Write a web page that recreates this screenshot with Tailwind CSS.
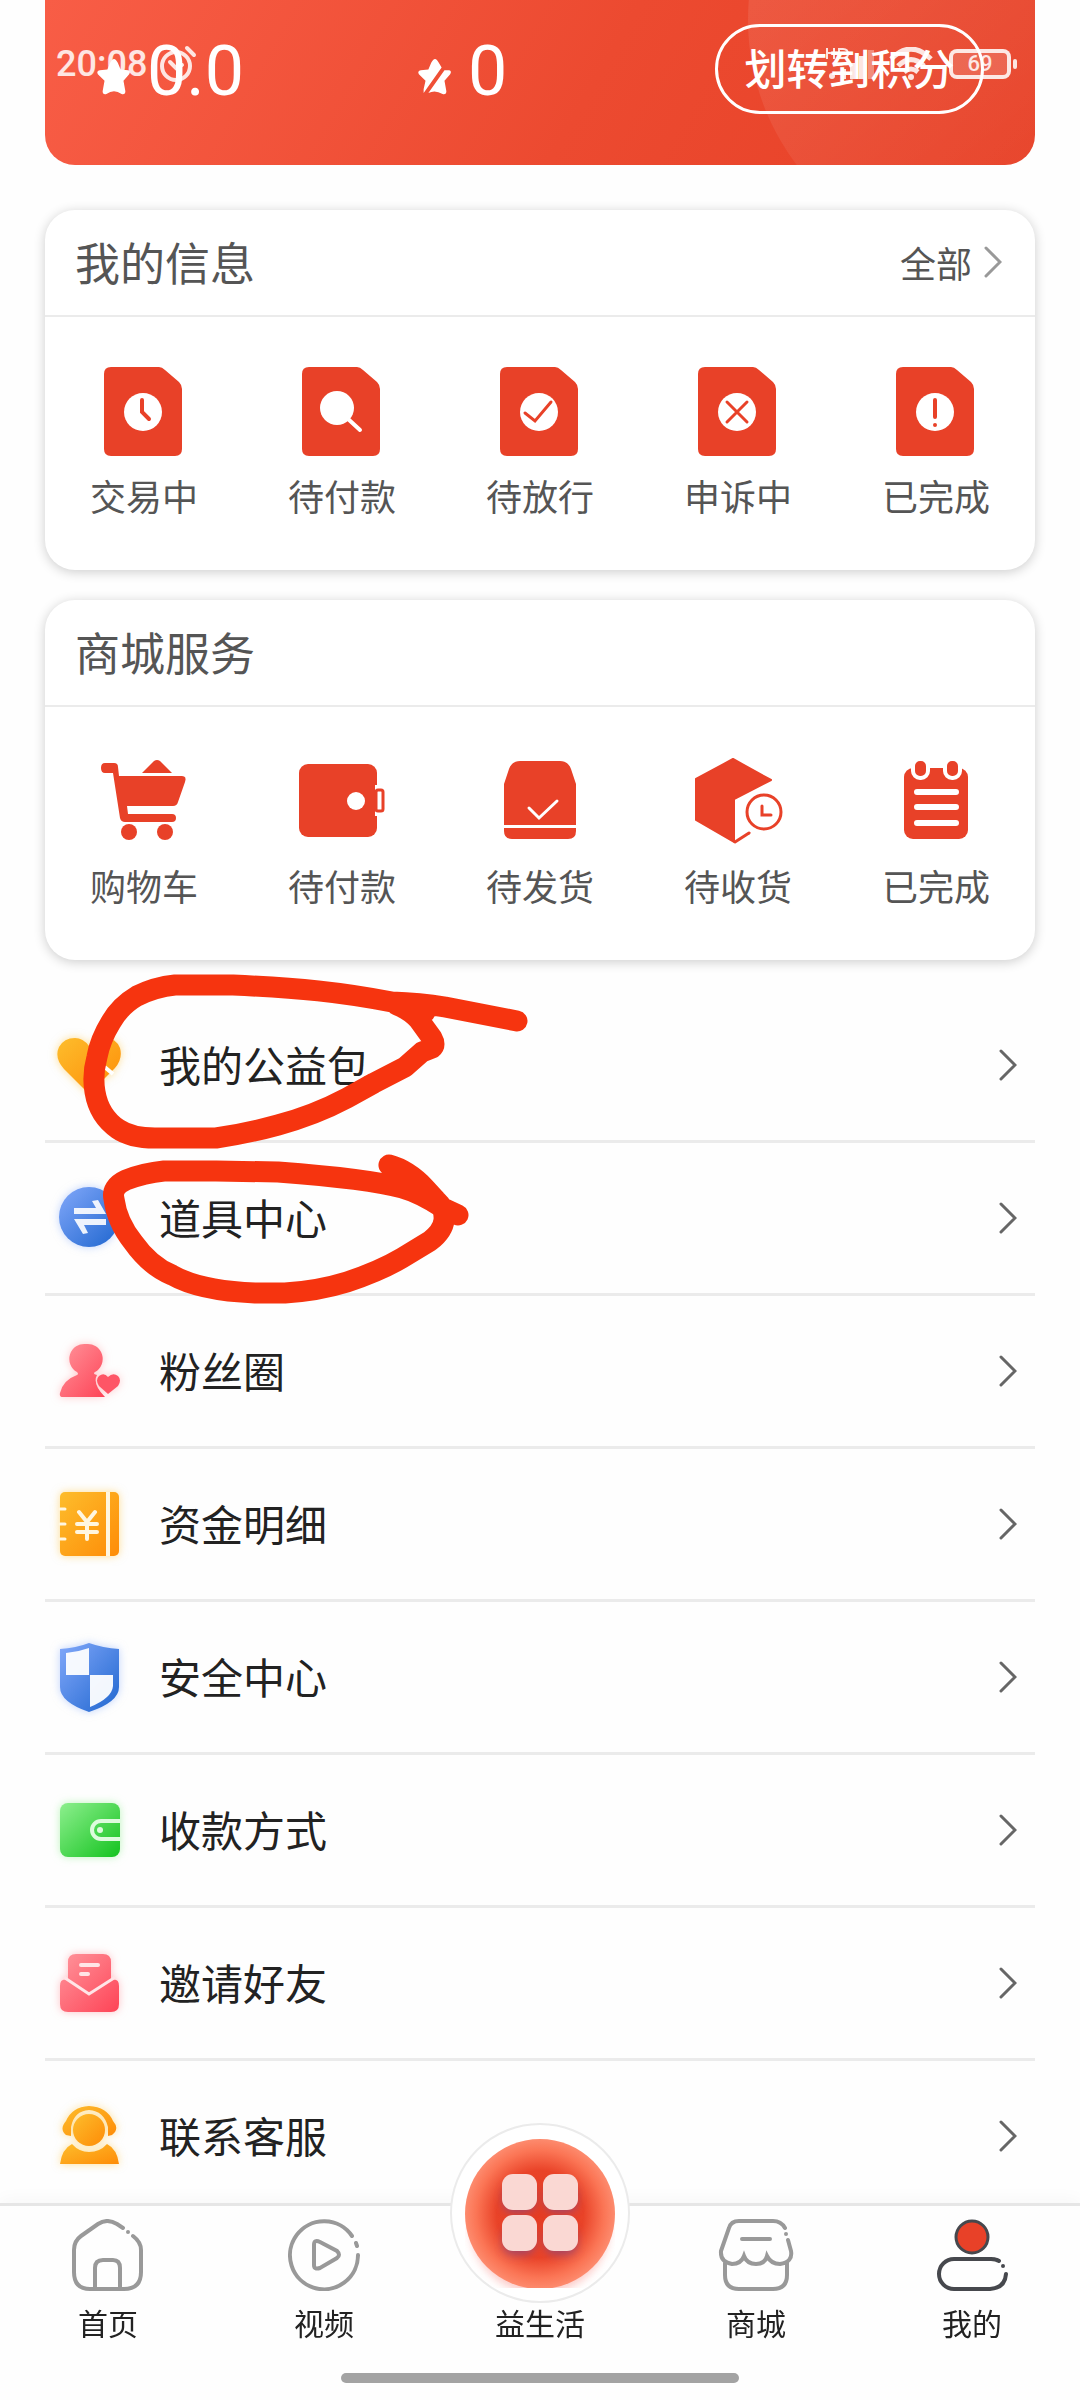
<!DOCTYPE html>
<html lang="zh-CN">
<head>
<meta charset="utf-8">
<meta name="viewport" content="width=device-width, initial-scale=1">
<title>我的</title>
<script src="https://cdn.jsdelivr.net/npm/@tailwindcss/browser@4"></script>
</head>
<body class="min-h-screen bg-[#fefefe] font-['Noto_Sans_CJK_SC',sans-serif] text-[#222]">

<!-- Shared gradients and symbols -->
<svg class="absolute size-0" aria-hidden="true">
  <defs>
    <linearGradient id="gold" x1="0" y1="0" x2="1" y2="1"><stop offset="0" stop-color="#fdbd2c"/><stop offset="1" stop-color="#fe8c07"/></linearGradient>
    <linearGradient id="blue" x1="0" y1="0" x2="1" y2="1"><stop offset="0" stop-color="#82a8fa"/><stop offset="1" stop-color="#1f66cf"/></linearGradient>
    <linearGradient id="pink" x1="0" y1="0" x2="1" y2="1"><stop offset="0" stop-color="#ff959c"/><stop offset="1" stop-color="#fe4356"/></linearGradient>
    <linearGradient id="green" x1="0" y1="0" x2="1" y2="1"><stop offset="0" stop-color="#8def8e"/><stop offset="1" stop-color="#14c31f"/></linearGradient>
    <symbol id="doc" viewBox="0 0 90 90"><path fill="#e84128" d="M11 1H60Q63 1 66 4L80 16Q83 19 83 23V83Q83 90 76 90H12Q5 90 5 83V8Q5 1 12 1Z"/></symbol>
    <symbol id="chevron" viewBox="0 0 18 32"><path fill="none" stroke="currentColor" stroke-width="3" stroke-linecap="round" d="M2 2L16 16L2 30"/></symbol>
  </defs>
</svg>

<!-- System status bar -->
<div class="absolute inset-x-0 top-0 z-20 flex h-[128px] items-center pl-[56px] pr-[63px] text-white/85 font-[Roboto,sans-serif]">
  <span class="text-[36px] font-medium leading-[40px]">20:08</span>
  <svg class="ml-3 h-[38px] w-[40px]" viewBox="0 0 40 38" fill="none" stroke="currentColor" stroke-width="4" stroke-linecap="round"><circle cx="17" cy="21" r="14"/><path d="M11 17L17 23L23 20M28 3L35 10"/></svg>
  <div class="ml-auto flex items-center">
    <svg class="h-[34px] w-[52px]" viewBox="0 0 52 34" fill="currentColor" aria-label="HD"><path fill="none" stroke="currentColor" stroke-width="2" d="M2 1V12M2 6H9M9 1V12M14 2V11H18Q23 11 23 7Q23 2 18 2Z"/><circle cx="7" cy="29" r="3"/><rect x="16" y="22" width="5" height="10"/><rect x="25" y="16" width="5" height="16"/><rect x="34" y="9" width="6" height="23"/><rect x="43" y="3" width="6" height="29" opacity=".4"/></svg>
    <svg class="ml-3 h-[34px] w-[44px]" viewBox="0 0 44 34" fill="none" stroke="currentColor" stroke-width="5"><path d="M2 12Q22 -8 42 12M9 19Q22 6 35 19M15 25Q22 19 29 25"/><circle cx="22" cy="30" r="3" fill="currentColor" stroke="none"/></svg>
    <div class="ml-4 flex h-[30px] w-[62px] items-center justify-center rounded-lg border-4 border-white/85 bg-white/15">
      <span class="text-[22px] font-medium leading-[24px]">69</span>
    </div>
    <span class="ml-0.5 h-[10px] w-[4px] rounded-full bg-white/85"></span>
  </div>
</div>

<div class="mx-[45px]">
  <!-- Balance card -->
  <section class="relative flex items-center overflow-hidden rounded-b-[30px] bg-[linear-gradient(120deg,#f85d46,#ec4a30_55%,#e74127)] px-[51px] pb-[49px] pt-[22px] text-white">
    <svg class="absolute right-0 top-0 h-full w-[290px]" viewBox="0 0 290 165" aria-hidden="true">
      <defs><linearGradient id="halo" x1="0" y1="0" x2=".8" y2="1"><stop offset="0" stop-color="#fff" stop-opacity=".13"/><stop offset="1" stop-color="#fff" stop-opacity="0"/></linearGradient></defs>
      <circle cx="243" cy="20" r="240" fill="url(#halo)"/>
    </svg>
    <div class="relative flex w-[321px] items-baseline gap-[15px] pt-1">
      <svg class="size-[36px]" viewBox="0 0 36 38" fill="#fff"><path d="M18 0Q20 0 22 4L25 11L33 12Q36 13 34 16L28 23L30 34Q30 38 26 37Q18 31 10 37Q6 38 6 34L8 23L1 16Q-1 13 3 12L11 11L14 4Q16 0 18 0Z"/></svg>
      <span class="font-[Roboto,sans-serif] text-[70px] leading-[90px]">0.0</span>
    </div>
    <div class="relative flex items-baseline gap-[15px] pt-1">
      <svg class="size-[36px]" viewBox="0 0 36 38" fill="#fff"><path d="M18 0Q20 0 22 4L25 9L6 36V32L8 23L1 16Q-1 13 3 12L11 11L14 4Q16 0 18 0Z"/><path d="M28 12L33 12Q36 13 34 16L28 23L30 34Q30 38 26 37Q18 32 11 36Z"/></svg>
      <span class="font-[Roboto,sans-serif] text-[70px] leading-[90px]">0</span>
    </div>
    <button type="button" class="relative ml-auto h-[90px] w-[269px] rounded-full border-3 border-white pb-1 text-[42px] font-medium leading-[60px]">划转到积分</button>
  </section>

  <!-- My information -->
  <section class="mt-[45px] rounded-[30px] bg-white pb-[50px] shadow-[0_2px_12px_rgba(0,0,0,0.2)]">
    <header class="flex h-[107px] items-center justify-between border-b-2 border-[#ebebeb] pb-[2px] pl-[30px] pr-[33px] text-[#555]">
      <h2 class="text-[45px] leading-[60px]">我的信息</h2>
      <a href="#" class="flex items-center gap-3 text-[36px] leading-[54px]">全部<svg class="h-[32px] w-[18px] text-[#999]"><use href="#chevron"/></svg></a>
    </header>
    <nav class="grid grid-cols-5 pt-[49px] text-[36px] leading-[50px] text-[#555]">
      <a href="#" class="flex flex-col items-center gap-[14px]">
        <svg class="size-[90px]" viewBox="0 0 90 90"><use href="#doc"/><circle cx="44" cy="46" r="19" fill="#fff"/><path fill="none" stroke="#e84128" stroke-width="4" stroke-linecap="round" d="M43 34V46L50 53"/></svg>交易中</a>
      <a href="#" class="flex flex-col items-center gap-[14px]">
        <svg class="size-[90px]" viewBox="0 0 90 90"><use href="#doc"/><circle cx="40" cy="42" r="17" fill="#fff"/><path stroke="#fff" stroke-width="4" stroke-linecap="round" d="M50 52L63 64"/></svg>待付款</a>
      <a href="#" class="flex flex-col items-center gap-[14px]">
        <svg class="size-[90px]" viewBox="0 0 90 90"><use href="#doc"/><circle cx="44" cy="46" r="19" fill="#fff"/><path fill="none" stroke="#e84128" stroke-width="3" stroke-linecap="round" d="M30 47L40 55L56 36"/></svg>待放行</a>
      <a href="#" class="flex flex-col items-center gap-[14px]">
        <svg class="size-[90px]" viewBox="0 0 90 90"><use href="#doc"/><circle cx="44" cy="46" r="19" fill="#fff"/><path stroke="#e84128" stroke-width="3" stroke-linecap="round" d="M34 36L54 56M54 36L34 56"/></svg>申诉中</a>
      <a href="#" class="flex flex-col items-center gap-[14px]">
        <svg class="size-[90px]" viewBox="0 0 90 90"><use href="#doc"/><circle cx="44" cy="46" r="19" fill="#fff"/><path stroke="#e84128" stroke-width="4" stroke-linecap="round" d="M44 34V51M44 59V59"/></svg>已完成</a>
    </nav>
  </section>

  <!-- Mall services -->
  <section class="mt-[30px] rounded-[30px] bg-white pb-[50px] shadow-[0_2px_12px_rgba(0,0,0,0.2)]">
    <header class="flex h-[107px] items-center border-b-2 border-[#ebebeb] pb-[2px] pl-[30px] pr-[33px] text-[#555]">
      <h2 class="text-[45px] leading-[60px]">商城服务</h2>
    </header>
    <nav class="grid grid-cols-5 pt-[49px] text-[36px] leading-[50px] text-[#555]">
      <a href="#" class="flex flex-col items-center gap-[14px]">
        <svg class="size-[90px]" viewBox="0 0 90 90" fill="#e84128"><path d="M6 7H15Q19 7 19 11L20 20H83Q88 20 86 26L79 46Q78 50 74 50H28L29 58H73Q77 58 77 62Q77 66 73 66H26Q22 66 21 62L14 17H6Q2 17 2 12Q2 7 6 7Z"/><path d="M43 17L55 5Q58 3 61 5L73 17Z"/><circle cx="30" cy="76" r="8"/><circle cx="66" cy="76" r="8"/></svg>购物车</a>
      <a href="#" class="flex flex-col items-center gap-[14px]">
        <svg class="size-[90px]" viewBox="0 0 90 90" fill="#e84128"><rect x="2" y="8" width="78" height="73" rx="9"/><circle cx="59" cy="45" r="9" fill="#fff"/><path fill="#fff" d="M78 29H90V60H78Z"/><rect x="79" y="34" width="7" height="21" rx="2" fill="#fff" stroke="#e84128" stroke-width="3"/></svg>待付款</a>
      <a href="#" class="flex flex-col items-center gap-[14px]">
        <svg class="size-[90px]" viewBox="0 0 90 90" fill="#e84128"><path d="M9 69V28L14 13Q17 5 25 5H65Q73 5 76 13L81 28V69ZM9 72H81V75Q81 83 73 83H17Q9 83 9 75Z"/><path fill="none" stroke="#fff" stroke-width="3" stroke-linecap="round" d="M34 52L44 62L62 45"/></svg>待发货</a>
      <a href="#" class="flex flex-col items-center gap-[14px]">
        <svg class="size-[90px]" viewBox="0 0 90 90"><path fill="#e84128" stroke="#e84128" stroke-width="2" stroke-linejoin="round" d="M40 3L78 24L41 43V86L3 64V23Z"/><g fill="none" stroke="#e84128" stroke-width="3" stroke-linecap="round"><path d="M42 86L56 77"/><circle cx="71" cy="56" r="17"/><path d="M69 50V59H78"/></g></svg>待收货</a>
      <a href="#" class="flex flex-col items-center gap-[14px]">
        <svg class="size-[90px]" viewBox="0 0 90 90"><rect x="13" y="12" width="64" height="71" rx="9" fill="#e84128"/><g fill="#e84128" stroke="#fff" stroke-width="4"><rect x="22" y="3" width="15" height="19" rx="7"/><rect x="54" y="3" width="15" height="19" rx="7"/></g><path stroke="#fff" stroke-width="6" stroke-linecap="round" d="M26 36H65M26 51H65M26 67H65"/></svg>已完成</a>
    </nav>
  </section>

  <!-- Menu -->
  <div class="relative mt-[30px]">
    <ul class="divide-y-3 divide-[#ebebeb] text-[42px] leading-[60px]">
      <li><a href="#" class="flex h-[150px] items-center gap-[24px] pr-[18px]">
        <svg class="size-[90px] drop-shadow-[0_0_4px_#fdbd2c80]" viewBox="0 0 90 90"><path fill="url(#gold)" d="M44 74L19 49Q9 38 14 27Q19 18 30 18Q38 18 44 26Q51 18 60 18Q71 18 75 28Q78 39 70 48Z"/><path stroke="#fff" stroke-width="4" d="M56 44L68 54"/></svg>
        <span class="grow pb-[2px]">我的公益包</span><svg class="h-[32px] w-[18px] text-[#666]"><use href="#chevron"/></svg></a></li>
      <li><a href="#" class="flex h-[150px] items-center gap-[24px] pr-[18px]">
        <svg class="size-[90px] drop-shadow-[0_0_4px_#82a8fa80]" viewBox="0 0 90 90"><circle cx="44" cy="44" r="30" fill="url(#blue)"/><path fill="#fff" opacity=".9" d="M29 35H51L47 28L53 27L61 41H29ZM61 46V52H39L43 60L38 61L29 46Z"/></svg>
        <span class="grow pb-[2px]">道具中心</span><svg class="h-[32px] w-[18px] text-[#666]"><use href="#chevron"/></svg></a></li>
      <li><a href="#" class="flex h-[150px] items-center gap-[24px] pr-[18px]">
        <svg class="size-[90px] drop-shadow-[0_0_4px_#ff959c80]" viewBox="0 0 90 90"><path fill="url(#pink)" d="M41 18A15 15 0 0 1 50 46Q47 48 52 49Q47 58 60 71H18Q14 71 15 67Q18 54 32 49Q34 48 32 46A15 15 0 0 1 41 18Z"/><path fill="#fe5566" d="M63 68L54 60Q50 54 54 50Q59 46 63 51Q68 46 73 50Q77 54 73 60Z"/></svg>
        <span class="grow pb-[2px]">粉丝圈</span><svg class="h-[32px] w-[18px] text-[#666]"><use href="#chevron"/></svg></a></li>
      <li><a href="#" class="flex h-[150px] items-center gap-[24px] pr-[18px]">
        <svg class="size-[90px] drop-shadow-[0_0_4px_#fdbd2c80]" viewBox="0 0 90 90"><rect x="15" y="13" width="59" height="64" rx="5" fill="url(#gold)"/><g fill="none" stroke="#fff6e0" stroke-width="4" stroke-linecap="round"><path stroke-linecap="butt" d="M63 13V77"/><path stroke-width="3" d="M15 30H20M15 45H20M15 60H20"/><path d="M34 33L42 43L50 33M42 43V60M32 45H52M32 53H52"/></g></svg>
        <span class="grow pb-[2px]">资金明细</span><svg class="h-[32px] w-[18px] text-[#666]"><use href="#chevron"/></svg></a></li>
      <li><a href="#" class="flex h-[150px] items-center gap-[24px] pr-[18px]">
        <svg class="size-[90px] drop-shadow-[0_0_4px_#82a8fa80]" viewBox="0 0 90 90"><path fill="url(#blue)" d="M44 11Q58 16 74 17V55Q74 70 44 80Q15 70 15 55V17Q31 16 44 11Z"/><path fill="#fff" opacity=".94" d="M44 16V43H21V21Q33 20 44 16ZM45 43H68V54Q67 66 45 75Z"/></svg>
        <span class="grow pb-[2px]">安全中心</span><svg class="h-[32px] w-[18px] text-[#666]"><use href="#chevron"/></svg></a></li>
      <li><a href="#" class="flex h-[150px] items-center gap-[24px] pr-[18px]">
        <svg class="size-[90px] drop-shadow-[0_0_4px_#8def8e90]" viewBox="0 0 90 90"><rect x="15" y="18" width="60" height="54" rx="8" fill="url(#green)"/><path fill="none" stroke="#ddfbdd" stroke-width="4" d="M75 36H56A9 9 0 0 0 56 54H75"/><circle cx="55" cy="45" r="3" fill="#ddfbdd"/></svg>
        <span class="grow pb-[2px]">收款方式</span><svg class="h-[32px] w-[18px] text-[#666]"><use href="#chevron"/></svg></a></li>
      <li><a href="#" class="flex h-[150px] items-center gap-[24px] pr-[18px]">
        <svg class="size-[90px] drop-shadow-[0_0_4px_#ff959c90]" viewBox="0 0 90 90"><path fill="url(#pink)" d="M31 16H58Q66 16 66 24V42Q74 40 74 48V66Q74 74 66 74H23Q15 74 15 66V48Q15 40 23 42V24Q23 16 31 16Z"/><g fill="none" stroke="#ffe5e7" stroke-width="4" stroke-linecap="round"><path stroke-width="3" d="M20 40L44 56L69 40"/><path d="M36 27H53M36 36H43"/></g></svg>
        <span class="grow pb-[2px]">邀请好友</span><svg class="h-[32px] w-[18px] text-[#666]"><use href="#chevron"/></svg></a></li>
      <li><a href="#" class="flex h-[150px] items-center gap-[24px] pr-[18px]">
        <svg class="size-[90px] drop-shadow-[0_0_4px_#fdbd2c80]" viewBox="0 0 90 90" fill="url(#gold)"><path d="M44 15Q62 16 68 30Q75 38 67 44L63 45V36Q59 20 44 19Q29 20 26 36V45L21 44Q14 38 21 30Q27 16 44 15Z"/><circle cx="44" cy="39" r="16"/><path d="M27 53Q34 61 44 61Q55 61 62 53Q72 58 74 73H15Q17 58 27 53Z"/></svg>
        <span class="grow pb-[2px]">联系客服</span><svg class="h-[32px] w-[18px] text-[#666]"><use href="#chevron"/></svg></a></li>
    </ul>

    <!-- Hand-drawn marks over the first two rows -->
    <svg class="pointer-events-none absolute -top-5 left-0 h-[350px] w-[500px]" viewBox="45 970 500 350" fill="none" stroke="#f6340f" stroke-width="21" stroke-linecap="round" stroke-linejoin="round" aria-hidden="true">
      <path d="M517 1021L445 1007Q420 1003 392 1002C340 992 300 988 233 985H175Q155 987 137 996Q120 1006 111 1022Q100 1040 97 1057Q92 1075 95 1092Q99 1116 118 1129Q131 1138 155 1138H216Q245 1134 278 1125Q315 1115 347 1098L374 1083L405 1067L422 1052L432 1048Q436 1045 432 1038L419 1020Q410 1010 397 1005L425 1012"/>
      <path d="M458 1215L443 1208Q420 1193 402 1188Q370 1179 278 1172L216 1171H164Q144 1173 126 1180Q111 1187 114 1199Q117 1222 133 1242Q150 1266 172 1275Q200 1291 255 1293H285Q318 1291 347 1282Q380 1271 402 1258L430 1241Q443 1231 444 1220Q445 1208 436 1200L425 1188Q408 1170 389 1165L405 1180L430 1195"/>
    </svg>
  </div>
</div>

<!-- Tab bar -->
<footer class="fixed inset-x-0 bottom-0 z-10 border-t-3 border-[#e6e6e6] bg-[#fefefe] shadow-[0_-4px_16px_rgba(0,0,0,0.03)]">
  <nav class="grid grid-cols-5 pt-[13px] text-[30px] leading-[42px] text-[#222]">
    <a href="#" class="flex flex-col items-center gap-[10px]">
      <svg class="size-[72px]" viewBox="0 0 72 72" fill="none" stroke="#999" stroke-width="4" stroke-linecap="round"><path d="M51 9L45 5Q35 -1 26 5L9 17Q2 22 2 31V53Q2 70 18 70H52Q69 70 69 53V31Q69 23 61 17M56 13V13M23 69V49Q23 41 31 41H41Q48 41 48 49V69"/></svg>首页</a>
    <a href="#" class="flex flex-col items-center gap-[10px]">
      <svg class="size-[72px]" viewBox="0 0 72 72" fill="none" stroke="#999" stroke-width="4" stroke-linecap="round"><path d="M64 17A34 34 0 1 0 70 36M68 24L69 27M26 26Q26 20 32 23L49 32Q53 36 49 39L32 49Q26 51 26 46Z"/></svg>视频</a>
    <a href="#" class="relative flex flex-col items-center justify-end">
      <span class="absolute bottom-[40px] left-1/2 grid size-[180px] -translate-x-1/2 place-items-center rounded-full border-2 border-[#ebebeb] bg-white">
        <svg class="size-[150px]" viewBox="0 0 150 150">
          <defs>
            <radialGradient id="orb"><stop offset="0" stop-color="#e53c22"/><stop offset=".58" stop-color="#e94328"/><stop offset=".85" stop-color="#fb7555"/><stop offset="1" stop-color="#fd8b6e"/></radialGradient>
            <filter id="soft" x="-20%" y="-20%" width="140%" height="150%"><feGaussianBlur stdDeviation="4"/></filter>
          </defs>
          <ellipse cx="75" cy="88" rx="70" ry="68" fill="#fbb5b0" opacity=".7" filter="url(#soft)"/>
          <circle cx="75" cy="76" r="75" fill="url(#orb)"/>
          <g fill="#8a4a80" opacity=".7" filter="url(#soft)"><rect x="38" y="46" width="32" height="29" rx="10"/><rect x="80" y="46" width="32" height="29" rx="10"/><rect x="38" y="88" width="32" height="29" rx="10"/><rect x="80" y="88" width="32" height="29" rx="10"/></g>
          <g fill="#fad8d3"><rect x="37" y="36" width="35" height="36" rx="11"/><rect x="78" y="36" width="35" height="36" rx="11"/><rect x="37" y="77" width="35" height="36" rx="11"/><rect x="78" y="77" width="35" height="36" rx="11"/></g>
        </svg>
      </span>
      <span class="relative">益生活</span>
    </a>
    <a href="#" class="flex flex-col items-center gap-[10px]">
      <svg class="h-[72px] w-[76px]" viewBox="0 0 76 72" fill="none" stroke="#999" stroke-width="4" stroke-linecap="round"><path d="M67 9Q63 2 55 2H21Q13 2 11 9L3 32Q2 43 14 45Q23 45 26 37Q29 45 38 45Q47 45 49 37Q53 45 62 45Q75 43 73 32L70 21M68 15V15M24 20H52M7 44V56Q7 70 21 70H55Q69 70 69 56V44"/></svg>商城</a>
    <a href="#" aria-current="page" class="flex flex-col items-center gap-[10px]">
      <svg class="size-[72px]" viewBox="0 0 72 72" fill="none" stroke="#46484d" stroke-width="4" stroke-linecap="round"><circle cx="36" cy="18" r="16" fill="#e84128" stroke-width="3"/><path d="M63 42Q60 40 55 40H18A15 15 0 0 0 18 70H54Q69 69 70 55M67 47V47"/></svg>我的</a>
  </nav>
  <div class="mx-auto mb-[17px] mt-[30px] h-[10px] w-[398px] rounded-full bg-[#a3a3a3]"></div>
</footer>
</body>
</html>
